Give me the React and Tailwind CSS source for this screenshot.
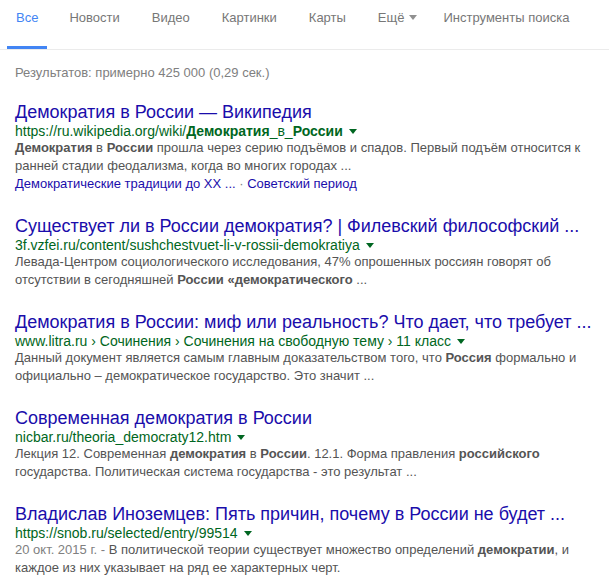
import React from 'react';

const tabs = [
  { label: 'Все', active: true, cls: 'ml-[7px] px-[9px]' },
  { label: 'Новости', cls: 'ml-[14px] px-[8px]' },
  { label: 'Видео', cls: 'ml-[16px] px-[8px]' },
  { label: 'Картинки', cls: 'ml-[16px] px-[8px]' },
  { label: 'Карты', cls: 'ml-[16px] px-[8px]' },
  { label: 'Ещё', more: true, cls: 'ml-[16px] px-[8px]' },
  { label: 'Инструменты поиска', cls: 'ml-[10px] px-[8px]' },
];

const Arrow = () => (
  <span className="inline-block ml-[6px] align-middle w-0 h-0 border-x-[4px] border-x-transparent border-t-[5px] border-t-[#006621] relative top-[-1px]" />
);

const B = ({ children }) => <b className="font-bold">{children}</b>;

const Result = ({ title, url, children, extra }) => (
  <div className="mb-[22px]">
    <div className="text-[18px] leading-[22px] text-[#1a0dab] whitespace-nowrap">{title}</div>
    <div className="text-[14px] leading-[16px] text-[#006621] whitespace-nowrap">
      {url}
      <Arrow />
    </div>
    <div className="text-[13px] leading-[18px] text-[#545454] whitespace-nowrap">{children}</div>
    {extra}
  </div>
);

export default function App() {
  return (
    <div className="w-[609px] h-[586px] bg-white overflow-hidden font-['Liberation_Sans',Arial,sans-serif]">
      {/* вкладки */}
      <div className="flex h-[50px] border-b border-[#ebebeb]">
        {tabs.map((t) => (
          <div
            key={t.label}
            className={`${t.cls} h-[49px] pt-[10px] text-[13px] leading-[16px] whitespace-nowrap ${
              t.active ? 'text-[#4285f4] border-b-[3px] border-[#4285f4]' : 'text-[#777]'
            }`}
          >
            {t.label}
            {t.more && (
              <span className="inline-block ml-[5px] align-middle w-0 h-0 border-x-[4px] border-x-transparent border-t-[5px] border-t-[#909090] relative top-[-1px]" />
            )}
          </div>
        ))}
      </div>

      <div className="pl-[15px]">
        <div className="mt-[14px] mb-[19px] text-[13px] leading-[18px] text-[#808080]">
          Результатов: примерно 425 000 (0,29 сек.)
        </div>

        <Result
          title="Демократия в России — Википедия"
          url={
            <>
              https://ru.wikipedia.org/wiki/<B>Демократия</B>_в_<B>России</B>
            </>
          }
          extra={
            <div className="text-[13px] leading-[18px] text-[#1a0dab] whitespace-nowrap">
              Демократические традиции до XX ...
              <span className="text-[#808080]"> · </span>
              Советский период
            </div>
          }
        >
          <B>Демократия</B> в <B>России</B> прошла через серию подъёмов и спадов. Первый подъём относится к
          <br />
          ранней стадии феодализма, когда во многих городах ...
        </Result>

        <Result
          title="Существует ли в России демократия? | Филевский философский ..."
          url="3f.vzfei.ru/content/sushchestvuet-li-v-rossii-demokratiya"
        >
          Левада-Центром социологического исследования, 47% опрошенных россиян говорят об
          <br />
          отсутствии в сегодняшней <B>России «демократического</B> ...
        </Result>

        <Result
          title="Демократия в России: миф или реальность? Что дает, что требует ..."
          url="www.litra.ru › Сочинения › Сочинения на свободную тему › 11 класс"
        >
          Данный документ является самым главным доказательством того, что <B>Россия</B> формально и
          <br />
          официально – демократическое государство. Это значит ...
        </Result>

        <Result title="Современная демократия в России" url="nicbar.ru/theoria_democraty12.htm">
          Лекция 12. Современная <B>демократия</B> в <B>России</B>. 12.1. Форма правления <B>российского</B>
          <br />
          государства. Политическая система государства - это результат ...
        </Result>

        <Result
          title="Владислав Иноземцев: Пять причин, почему в России не будет ..."
          url="https://snob.ru/selected/entry/99514"
        >
          <span className="text-[#808080]">20 окт. 2015 г. - </span>В политической теории существует множество определений <B>демократии</B>, и
          <br />
          каждое из них указывает на ряд ее характерных черт.
        </Result>
      </div>
    </div>
  );
}
